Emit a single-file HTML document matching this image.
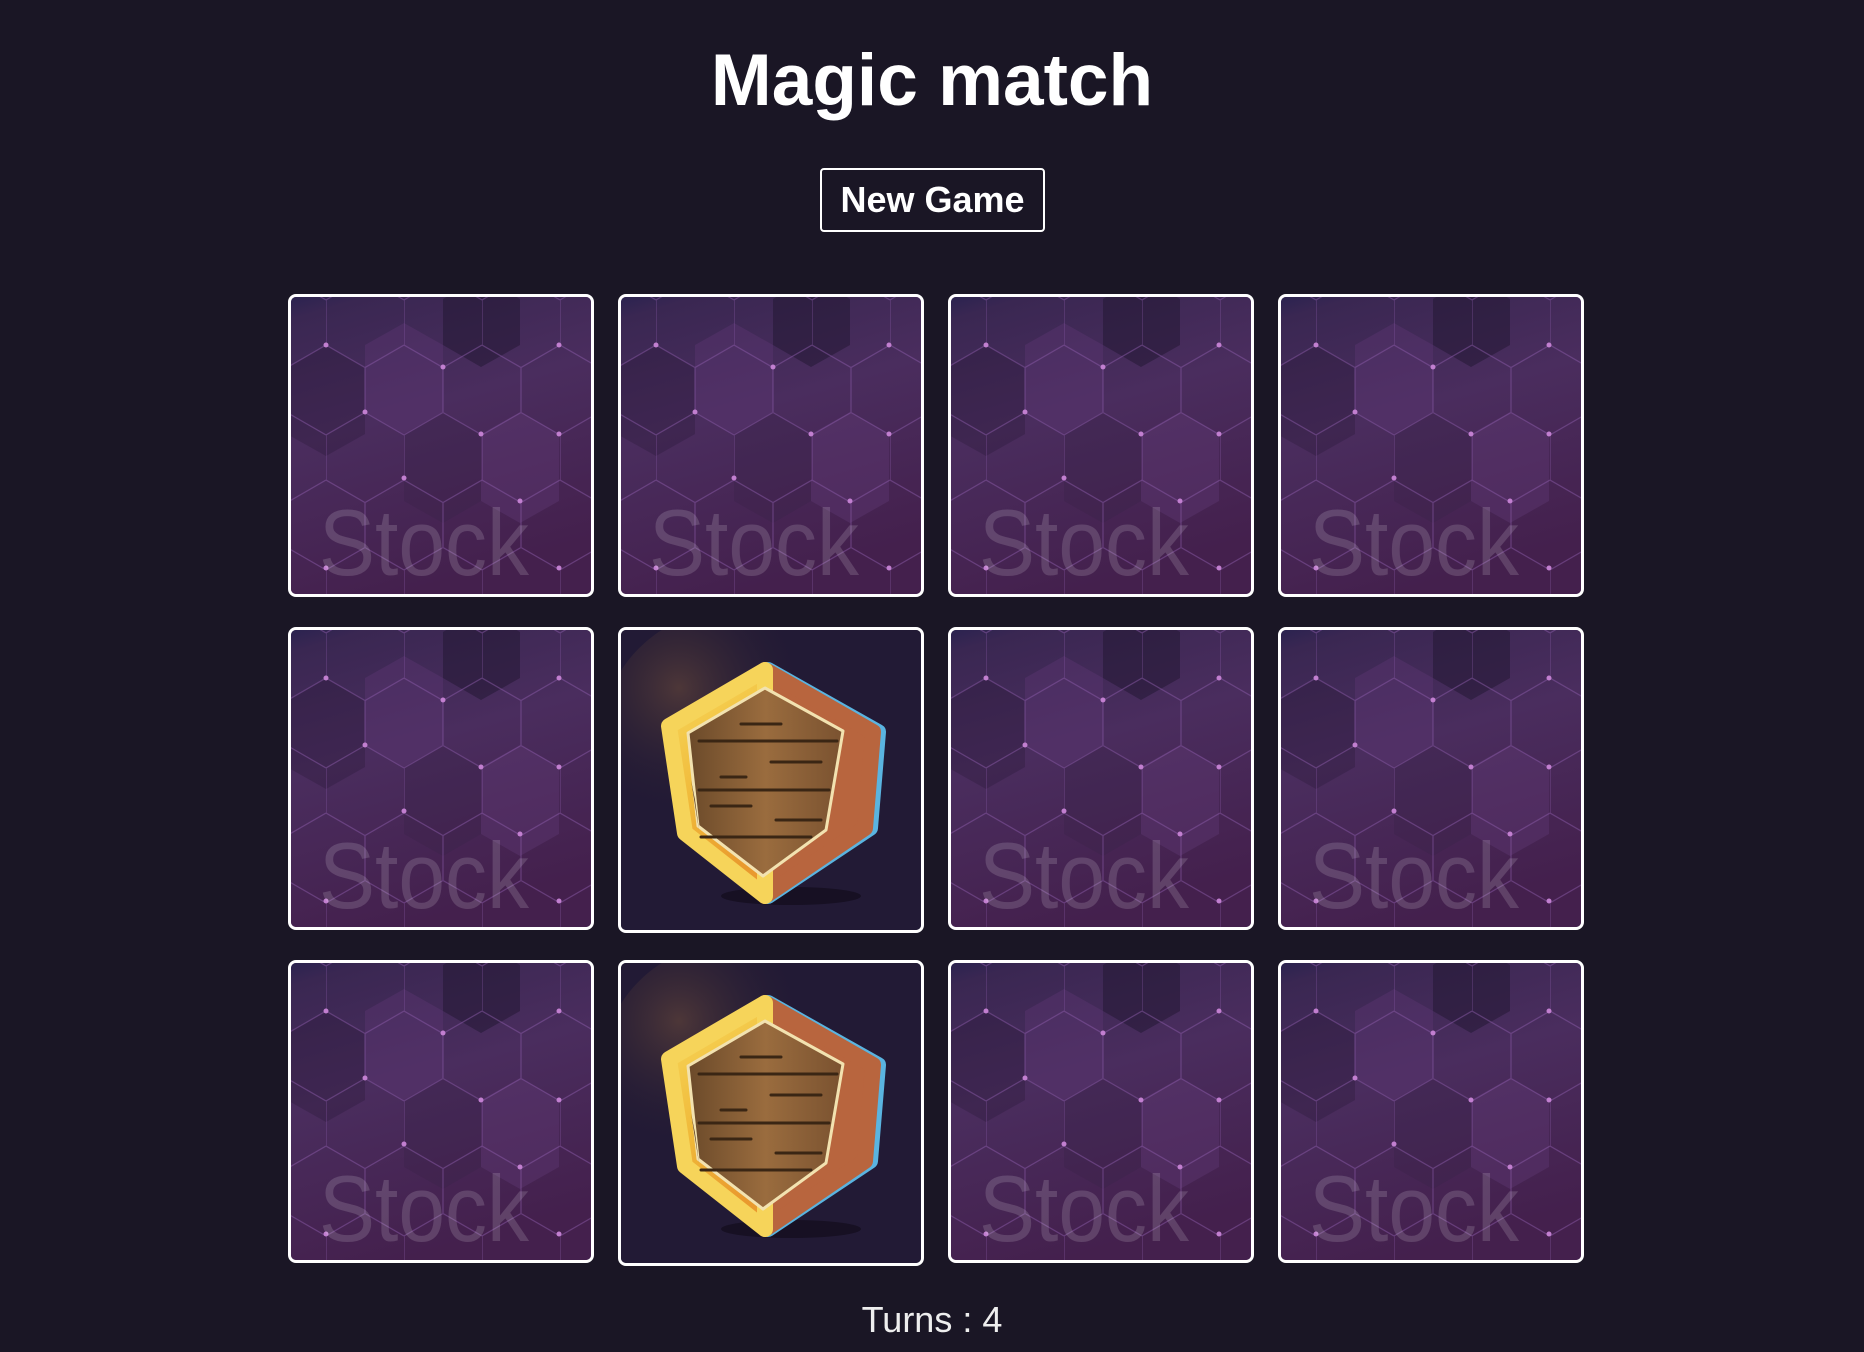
<!DOCTYPE html>
<html><head><meta charset="utf-8">
<style>
html,body{margin:0;padding:0;background:#1a1625;width:1864px;height:1352px;overflow:hidden;font-family:"Liberation Sans",sans-serif;color:#fff}
h1{position:absolute;left:0;width:1864px;top:35px;margin:0;text-align:center;font-size:73px;font-weight:bold;line-height:92px}
.btn{position:absolute;left:820px;top:168px;width:221px;height:60px;border:2px solid #fff;border-radius:4px;box-sizing:content-box;text-align:center;font-weight:bold;font-size:36px;line-height:60px}
.card{position:absolute;width:300px;height:297px;border:3px solid #fff;border-radius:8px;overflow:hidden;background:#41284f}
.card svg{display:block}
.flip{width:300px;height:300px;background:#221a35}
.turns{position:absolute;left:0;width:1864px;top:1298px;text-align:center;font-size:36px;line-height:44px;color:#eee}
</style></head><body>
<svg width="0" height="0" style="position:absolute">
<defs>
<linearGradient id="bg" x1="0" y1="0" x2="0.3" y2="1">
<stop offset="0" stop-color="#2b2350"/>
<stop offset="0.07" stop-color="#3a2752"/>
<stop offset="0.45" stop-color="#4a2d5e"/>
<stop offset="1" stop-color="#44204d"/>
</linearGradient>
<pattern id="hex" width="78" height="135" patternUnits="userSpaceOnUse" x="35" y="-19.5">
<path d="M0,22.5 L39,0 L78,22.5 M0,22.5 V67.5 L39,90 L78,67.5 M39,90 V135" fill="none" stroke="#8a5aa8" stroke-opacity="0.5" stroke-width="1.2"/>
</pattern>
<g id="back">
<rect width="304" height="304" fill="url(#bg)"/>
<polygon points="113,26 152,48 152,115 113,137 74,115 74,48" fill="#5a3570" opacity="0.45"/>
<polygon points="229,115 268,137 268,204 229,226 190,204 190,137" fill="#5d3872" opacity="0.45"/>
<polygon points="190,-20 229,2 229,48 190,70 152,48 152,2" fill="#1f1630" opacity="0.5"/>
<polygon points="35,48 74,70 74,137 35,159 -4,137 -4,70" fill="#2a1a3a" opacity="0.35"/>
<polygon points="152,115 190,137 190,204 152,226 113,204 113,137" fill="#3a2148" opacity="0.35"/>
<rect width="304" height="304" fill="url(#hex)"/>
<g fill="#c27fd0">
<circle cx="35" cy="48" r="2.5"/><circle cx="268" cy="48" r="2.5"/><circle cx="152" cy="70" r="2.5"/>
<circle cx="74" cy="115" r="2.5"/><circle cx="190" cy="137" r="2.5"/><circle cx="268" cy="137" r="2.5"/>
<circle cx="113" cy="181" r="2.5"/><circle cx="229" cy="204" r="2.5"/><circle cx="35" cy="271" r="2.5"/><circle cx="268" cy="271" r="2.5"/>
</g>
<text x="28" y="278" font-family="Liberation Sans, sans-serif" font-size="94" textLength="210" lengthAdjust="spacingAndGlyphs" fill="#ffffff" fill-opacity="0.15">Stock</text>
</g>
<radialGradient id="glow" cx="0.3" cy="0.3" r="0.5">
<stop offset="0" stop-color="#6a4a3a" stop-opacity="0.6"/>
<stop offset="1" stop-color="#221a35" stop-opacity="0"/>
</radialGradient>
<linearGradient id="gold" x1="0" y1="0" x2="0.3" y2="1">
<stop offset="0" stop-color="#f7da5c"/><stop offset="0.6" stop-color="#f0b93a"/><stop offset="1" stop-color="#e99a2e"/>
</linearGradient>
<linearGradient id="wood" x1="0" y1="0" x2="1" y2="0">
<stop offset="0" stop-color="#6b4a2a"/><stop offset="0.5" stop-color="#9a6c3e"/><stop offset="1" stop-color="#7a5230"/>
</linearGradient>
<g id="shield">
<rect width="304" height="304" fill="#221a35"/>
<circle cx="110" cy="110" r="130" fill="url(#glow)"/>
<ellipse cx="170" cy="266" rx="70" ry="9" fill="#120d1c" opacity="0.7"/>
<polygon points="147,40 257,102 249,198 147,266" fill="#5ab4e0" stroke="#5ab4e0" stroke-width="16" stroke-linejoin="round"/>
<polygon points="144,40 252,102 244,198 144,266" fill="#b8653e" stroke="#b8653e" stroke-width="16" stroke-linejoin="round"/>
<polygon points="144,40 48,96 64,203 144,266" fill="url(#gold)" stroke="#f6d45a" stroke-width="16" stroke-linejoin="round"/>
<polygon points="144,58 222,101 205,200 142,246 77,196 67,103" fill="url(#wood)" stroke="#f2e2b0" stroke-width="3" stroke-linejoin="round"/>
<g stroke="#3a2614" stroke-width="3" stroke-linecap="round">
<line x1="78" y1="111" x2="216" y2="111"/><line x1="78" y1="160" x2="208" y2="160"/>
<line x1="80" y1="207" x2="190" y2="207"/><line x1="120" y1="94" x2="160" y2="94"/>
<line x1="150" y1="132" x2="200" y2="132"/><line x1="100" y1="147" x2="125" y2="147"/>
<line x1="90" y1="176" x2="130" y2="176"/><line x1="155" y1="190" x2="200" y2="190"/>
</g>
<path d="M70,150 L78,200 L74,170 Z" fill="#5a3a1a"/>
</g>
</defs></svg>

<h1>Magic match</h1>
<div class="btn">New Game</div>

<div class="card" style="left:288px;top:294px"><svg width="304" height="304"><use href="#back"/></svg></div>
<div class="card" style="left:618px;top:294px"><svg width="304" height="304"><use href="#back"/></svg></div>
<div class="card" style="left:948px;top:294px"><svg width="304" height="304"><use href="#back"/></svg></div>
<div class="card" style="left:1278px;top:294px"><svg width="304" height="304"><use href="#back"/></svg></div>

<div class="card" style="left:288px;top:627px"><svg width="304" height="304"><use href="#back"/></svg></div>
<div class="card flip" style="left:618px;top:627px"><svg width="304" height="304"><use href="#shield"/></svg></div>
<div class="card" style="left:948px;top:627px"><svg width="304" height="304"><use href="#back"/></svg></div>
<div class="card" style="left:1278px;top:627px"><svg width="304" height="304"><use href="#back"/></svg></div>

<div class="card" style="left:288px;top:960px"><svg width="304" height="304"><use href="#back"/></svg></div>
<div class="card flip" style="left:618px;top:960px"><svg width="304" height="304"><use href="#shield"/></svg></div>
<div class="card" style="left:948px;top:960px"><svg width="304" height="304"><use href="#back"/></svg></div>
<div class="card" style="left:1278px;top:960px"><svg width="304" height="304"><use href="#back"/></svg></div>

<div class="turns">Turns : 4</div>
</body></html>
